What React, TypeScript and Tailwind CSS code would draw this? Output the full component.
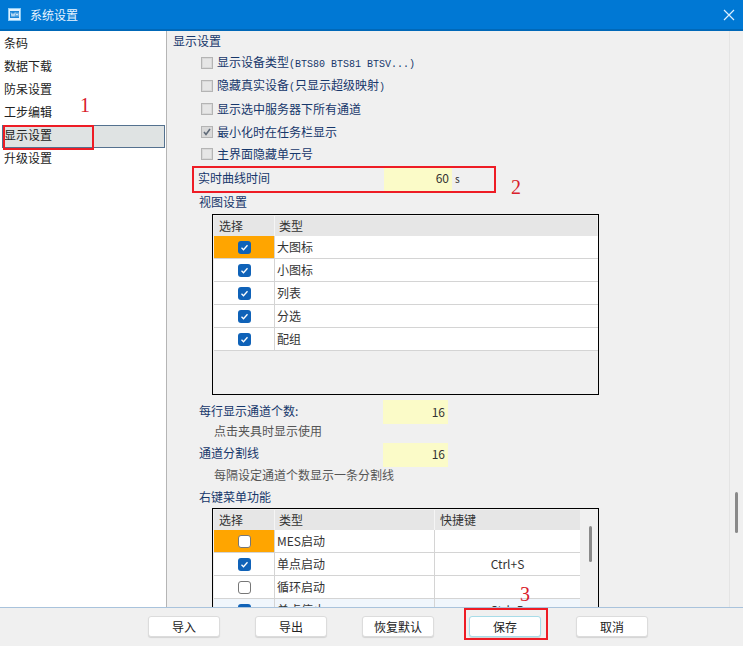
const font = { fontFamily: '"Noto Sans CJK SC", sans-serif' };
const mono = { fontFamily: '"Liberation Mono", monospace' };
const serif = { fontFamily: '"Liberation Serif", serif' };

const navItems = ['条码', '数据下载', '防呆设置', '工步编辑', '显示设置', '升级设置'];

const viewRows = ['大图标', '小图标', '列表', '分选', '配组'];

const menuRows = [
  { label: 'MES启动', checked: false, key: '' },
  { label: '单点启动', checked: true, key: 'Ctrl+S' },
  { label: '循环启动', checked: false, key: '' },
  { label: '单点停止', checked: true, key: 'Ctrl+D' },
];

const buttons = ['导入', '导出', '恢复默认', '保存', '取消'];

function Latin({ children }: { children: string }) {
  return (
    <span className="text-[10px]" style={mono}>
      {children}
    </span>
  );
}

function GrayCheck({ checked }: { checked?: boolean }) {
  return (
    <span className="flex h-[12px] w-[12px] shrink-0 items-center justify-center border border-[#b4b4b4] bg-[#d9d9d9]">
      {checked ? (
        <svg width="10" height="10" viewBox="0 0 10 10" fill="none">
          <path d="M2 5l2 2.5L8 2" stroke="#5f6a78" strokeWidth="1.6" />
        </svg>
      ) : (
        <span className="h-[8px] w-[8px] bg-[#e6e6e6]" />
      )}
    </span>
  );
}

function BlueCheck({ checked }: { checked: boolean }) {
  if (!checked) {
    return <span className="block h-[13px] w-[13px] rounded-[3px] border border-[#777] bg-white" />;
  }
  return (
    <span className="flex h-[13px] w-[13px] items-center justify-center rounded-[3px] bg-[#0f62b8]">
      <svg width="9" height="9" viewBox="0 0 9 9" fill="none">
        <path d="M1.5 4.8l2 2 4-4.6" stroke="#fff" strokeWidth="1.3" />
      </svg>
    </span>
  );
}

function YellowField({ value, className }: { value: string; className: string }) {
  return (
    <div className={`flex items-center justify-end bg-[#fbfbc8] pr-[3px] text-[12px] text-[#333] ${className}`}>
      {value}
    </div>
  );
}

export default function App() {
  return (
    <div className="relative flex h-[646px] w-[743px] flex-col overflow-hidden bg-[#f0f0f0]" style={font}>
      {/* Title bar */}
      <div className="flex h-[31px] shrink-0 items-center border-b-2 border-[#0068b8] bg-[#0078d4] pl-[8px] pr-[8px]">
        <svg width="13" height="13" viewBox="0 0 13 13" fill="none">
          <rect x="0.5" y="0.5" width="12" height="12" fill="#dff1ff" stroke="#8ecbf5" />
          <rect x="2" y="3" width="9" height="7" fill="#1b86d8" />
          <path d="M3 4.5l1 4 1-3 1 3 1-4M8 4.5v4M10 4.5v4M8 6.5h2" stroke="#fff" strokeWidth="0.7" />
        </svg>
        <span className="ml-[9px] text-[12px] text-[#e8f4ff]">系统设置</span>
        <svg className="ml-auto" width="12" height="12" viewBox="0 0 12 12" fill="none">
          <path d="M1 1l10 10M11 1L1 11" stroke="#dcefff" strokeWidth="1.2" />
        </svg>
      </div>

      <div className="flex min-h-0 flex-1">
        {/* Left nav */}
        <div className="w-[167px] shrink-0 border-r border-[#b5b5b5] bg-white pt-[2px] pl-[2px] pr-[1px]">
          {navItems.map((item) => (
            <div
              key={item}
              className={
                item === '显示设置'
                  ? 'flex h-[23px] items-center border border-[#54718f] bg-[#dfe3e3] pb-[4px] pl-[1px] text-[12px] text-[#222]'
                  : 'flex h-[23px] items-center pb-[4px] pl-[2px] text-[12px] text-[#222]'
              }
            >
              {item}
            </div>
          ))}
        </div>

        {/* Settings panel */}
        <div className="min-w-0 flex-1 overflow-hidden pl-[6px] text-[12px] text-[#16376b]">
          <div className="flex h-[20px] items-center">显示设置</div>

          <div className="mb-[1px] pl-[28px]">
            <div className="flex h-[23px] items-center gap-[4px]">
              <GrayCheck />
              <span>
                显示设备类型<Latin>(BTS80 BTS81 BTSV...)</Latin>
              </span>
            </div>
            <div className="flex h-[23px] items-center gap-[4px]">
              <GrayCheck />
              <span>
                隐藏真实设备<Latin>(</Latin>只显示超级映射<Latin>)</Latin>
              </span>
            </div>
            <div className="flex h-[23px] items-center gap-[4px]">
              <GrayCheck />
              <span>显示选中服务器下所有通道</span>
            </div>
            <div className="flex h-[23px] items-center gap-[4px]">
              <GrayCheck checked />
              <span>最小化时在任务栏显示</span>
            </div>
            <div className="flex h-[23px] items-center gap-[4px] pb-[1px]">
              <GrayCheck />
              <span>主界面隐藏单元号</span>
            </div>
          </div>

          <div className="flex h-[25px] items-center pl-[25px]">
            <span className="w-[186px] pb-[4px]">实时曲线时间</span>
            <YellowField value="60" className="h-[25px] w-[68px] pb-[3px]" />
            <span className="ml-[3px] pb-[3px] text-[10px] text-[#333]">s</span>
          </div>

          <div className="ml-[26px] flex h-[22px] items-center pb-[3px]">视图设置</div>

          {/* View table */}
          <div className="ml-[39px] h-[181px] w-[387px] border border-black pt-[1px] pl-[1px] text-[12px] text-[#333]">
            <div className="flex h-[20px] w-[383px] bg-[#e6e6e6]">
              <div className="flex w-[60px] items-center pl-[5px]">选择</div>
              <div className="flex items-center border-l border-[#f5f5f5] pl-[4px]">类型</div>
            </div>
            {viewRows.map((row, i) => (
              <div key={row} className="flex h-[23px] w-[384px] border-b border-[#d4d4d4] bg-white">
                <div className={`flex w-[60px] items-center justify-center ${i === 0 ? 'bg-[#ffa500]' : ''}`}>
                  <BlueCheck checked />
                </div>
                <div className="flex items-center border-l border-[#d4d4d4] pl-[2px]">{row}</div>
              </div>
            ))}
          </div>

          <div className="ml-[26px] mt-[5px] flex h-[24px] items-center">
            <span className="w-[184px] pb-[2px]">每行显示通道个数:</span>
            <YellowField value="16" className="h-[24px] w-[65px]" />
          </div>
          <div className="ml-[41px] flex h-[19px] items-center pb-[5px] text-[#555]">点击夹具时显示使用</div>
          <div className="ml-[26px] flex h-[24px] items-center">
            <span className="w-[184px] pb-[4px]">通道分割线</span>
            <YellowField value="16" className="h-[24px] w-[65px] pb-[2px]" />
          </div>
          <div className="ml-[41px] flex h-[20px] items-center pb-[4px] text-[#555]">每隔设定通道个数显示一条分割线</div>
          <div className="ml-[26px] flex h-[21px] items-center pb-[2px]">右键菜单功能</div>

          {/* Context menu table */}
          <div className="ml-[39px] flex h-[120px] w-[387px] border border-black pt-[1px] pl-[1px] text-[12px] text-[#333]">
            <div className="w-[366px]">
              <div className="flex h-[20px] bg-[#e6e6e6]">
                <div className="flex w-[60px] items-center pl-[5px]">选择</div>
                <div className="flex w-[160px] items-center border-l border-[#f5f5f5] pl-[4px]">类型</div>
                <div className="flex items-center border-l border-[#f5f5f5] pl-[5px]">快捷键</div>
              </div>
              {menuRows.map((row, i) => (
                <div key={row.label} className={`flex h-[23px] border-b border-[#d4d4d4] ${i === 3 ? 'bg-[#f0f6fc]' : 'bg-white'}`}>
                  <div className={`flex w-[60px] items-center justify-center ${i === 0 ? 'bg-[#ffa500]' : ''}`}>
                    <BlueCheck checked={row.checked} />
                  </div>
                  <div className="flex w-[160px] items-center border-l border-[#d4d4d4] pl-[2px]">{row.label}</div>
                  <div className="flex flex-1 items-center justify-center border-l border-[#d4d4d4]">{row.key}</div>
                </div>
              ))}
            </div>
            <div className="flex flex-1 justify-center pt-[16px] pl-[2px]">
              <div className="h-[36px] w-[3px] rounded-full bg-[#8a8a8a]" />
            </div>
          </div>
        </div>

        {/* Outer scrollbar */}
        <div className="flex w-[14px] shrink-0 justify-center border-l border-[#e4e4e4] pt-[461px]">
          <div className="h-[41px] w-[3px] rounded-full bg-[#8a8a8a]" />
        </div>
      </div>

      {/* Footer */}
      <div className="flex h-[39px] shrink-0 items-start gap-[35px] border-t border-[#a9c3dc] bg-[#f0f0f0] pt-[8px] pl-[148px]">
        {buttons.map((b) => (
          <button
            key={b}
            className={
              b === '保存'
                ? 'flex h-[21px] w-[72px] items-center justify-center rounded-[3px] border border-[#a8dce8] bg-white text-[12px] text-[#222] shadow-[0_1px_1px_rgba(0,0,0,0.12)]'
                : 'flex h-[21px] w-[72px] items-center justify-center rounded-[3px] border border-[#dcdcdc] bg-white text-[12px] text-[#222] shadow-[0_1px_1px_rgba(0,0,0,0.12)]'
            }
          >
            {b}
          </button>
        ))}
      </div>

      {/* Red annotations */}
      <div className="absolute left-[3px] top-[125px] h-[25px] w-[91px] border-2 border-[#ee1c25]" />
      <div className="absolute left-[192px] top-[166px] h-[27px] w-[304px] border-2 border-[#ee1c25]" />
      <div className="absolute left-[464px] top-[608px] h-[32px] w-[84px] border-2 border-[#ee1c25]" />
      <span className="absolute left-[80px] top-[94px] text-[20px] leading-[22px] text-[#d9202c]" style={serif}>1</span>
      <span className="absolute left-[511px] top-[176px] text-[20px] leading-[22px] text-[#d9202c]" style={serif}>2</span>
      <span className="absolute left-[520px] top-[583px] text-[20px] leading-[22px] text-[#d9202c]" style={serif}>3</span>
    </div>
  );
}
